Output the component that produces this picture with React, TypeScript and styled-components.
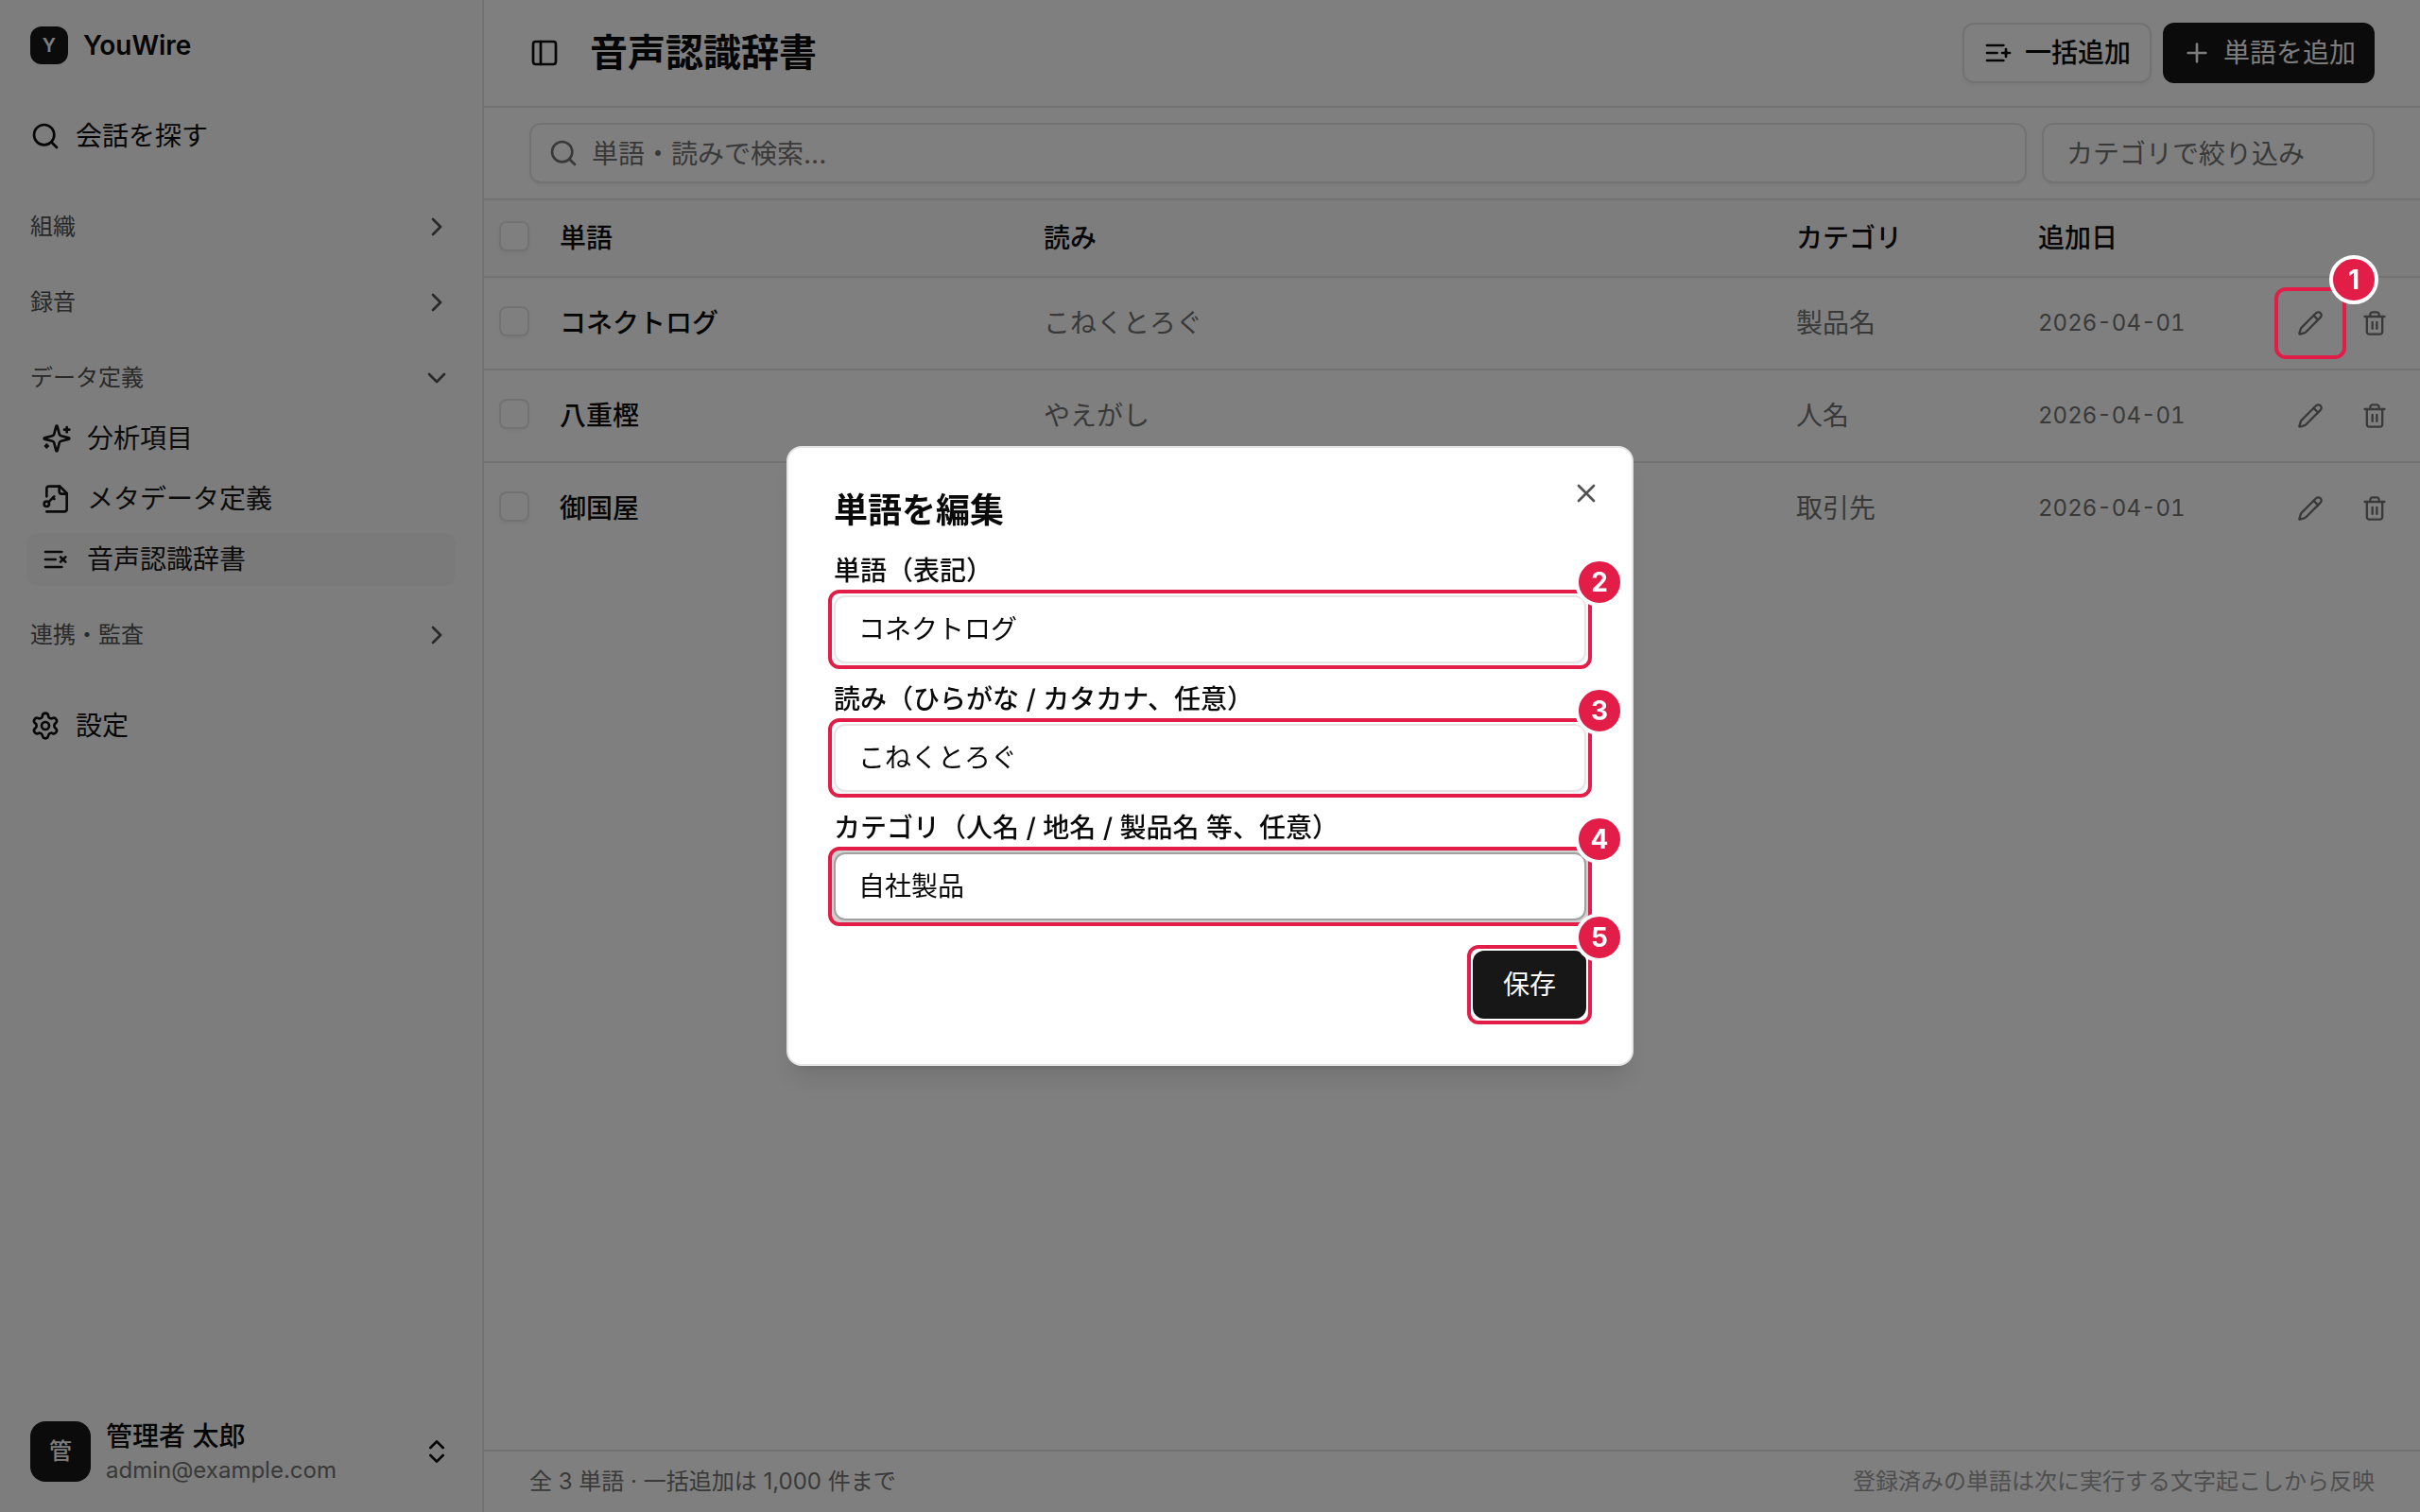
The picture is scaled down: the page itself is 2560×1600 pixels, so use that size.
import React from "react";
import styled, { createGlobalStyle, css } from "styled-components";
import {
  ChevronDown,
  ChevronRight,
  ChevronsUpDown,
  PanelLeft,
  Plus,
  Search,
  Settings,
  X,
} from "lucide-react";

const color = {
  text: "#0a0a0a",
  muted: "#737373",
  faint: "#9d9d9d",
  group: "#525252",
  border: "#e5e5e5",
  primary: "#171717",
  onPrimary: "#fafafa",
  sidebar: "#fafafa",
  accent: "#f5f5f5",
  mark: "#e11d48",
};

const GlobalStyle = createGlobalStyle`
  *, *::before, *::after { box-sizing: border-box; }
  body {
    margin: 0;
    background: #ffffff;
    color: ${color.text};
    font-family: Inter, "Noto Sans CJK JP", sans-serif;
    font-size: 28px;
    line-height: 40px;
    -webkit-font-smoothing: antialiased;
  }
  button, input { font: inherit; color: inherit; margin: 0; }
  button { background: none; border: 0; padding: 0; cursor: pointer; }
  svg { flex-shrink: 0; display: block; }
`;

/* ---------- icons ---------- */

const Glyph = ({ size = 32, children }: { size?: number; children: React.ReactNode }) => (
  <svg
    width={size}
    height={size}
    viewBox="0 0 24 24"
    fill="none"
    stroke="currentColor"
    strokeWidth="2"
    strokeLinecap="round"
    strokeLinejoin="round"
    aria-hidden="true"
  >
    {children}
  </svg>
);

const SparklesIcon = () => (
  <Glyph>
    <path d="M9.937 15.5A2 2 0 0 0 8.5 14.063l-6.135-1.582a.5.5 0 0 1 0-.962L8.5 9.936A2 2 0 0 0 9.937 8.5l1.582-6.135a.5.5 0 0 1 .963 0L14.063 8.5A2 2 0 0 0 15.5 9.937l6.135 1.581a.5.5 0 0 1 0 .964L15.5 14.063a2 2 0 0 0-1.437 1.437l-1.582 6.135a.5.5 0 0 1-.963 0z" />
    <path d="M20 3v4" />
    <path d="M22 5h-4" />
    <path d="M4 17v2" />
    <path d="M5 18H3" />
  </Glyph>
);

const FileKeyIcon = () => (
  <Glyph>
    <path d="M14 2v4a2 2 0 0 0 2 2h4" />
    <path d="M4 10V4a2 2 0 0 1 2-2h8.5L20 7.5V20a2 2 0 0 1-2 2H4" />
    <circle cx="4" cy="16" r="2" />
    <path d="m10 10-4.5 4.5" />
    <path d="m9 11 1 1" />
  </Glyph>
);

const ListXIcon = () => (
  <Glyph>
    <path d="M11 12H3" />
    <path d="M16 6H3" />
    <path d="M16 18H3" />
    <path d="m19 10-4 4" />
    <path d="m15 10 4 4" />
  </Glyph>
);

const ListPlusIcon = () => (
  <Glyph>
    <path d="M11 12H3" />
    <path d="M16 6H3" />
    <path d="M16 18H3" />
    <path d="M18 9v6" />
    <path d="M21 12h-6" />
  </Glyph>
);

const PencilIcon = () => (
  <Glyph size={28}>
    <path d="M21.174 6.812a1 1 0 0 0-3.986-3.987L3.842 16.174a2 2 0 0 0-.5.83l-1.321 4.352a.5.5 0 0 0 .623.622l4.353-1.32a2 2 0 0 0 .83-.497z" />
    <path d="m15 5 4 4" />
  </Glyph>
);

const TrashIcon = () => (
  <Glyph size={28}>
    <path d="M3 6h18" />
    <path d="M19 6v14c0 1-1 2-2 2H7c-1 0-2-1-2-2V6" />
    <path d="M8 6V4c0-1 1-2 2-2h4c1 0 2 1 2 2v2" />
    <path d="M10 11v6" />
    <path d="M14 11v6" />
  </Glyph>
);

/* ---------- layout ---------- */

const Shell = styled.div`
  display: flex;
  min-height: 100vh;
`;

const Sidebar = styled.aside`
  width: 512px;
  flex-shrink: 0;
  display: flex;
  flex-direction: column;
  padding: 16px;
  background: ${color.sidebar};
  border-right: 2px solid ${color.border};
`;

const Brand = styled.a`
  display: flex;
  align-items: center;
  gap: 16px;
  height: 64px;
  padding: 0 16px;
  margin-bottom: 32px;
  color: inherit;
  text-decoration: none;
  font-weight: 600;
`;

const BrandMark = styled.span`
  display: grid;
  place-items: center;
  width: 40px;
  height: 40px;
  border-radius: 12px;
  background: ${color.primary};
  color: ${color.onPrimary};
  font-size: 20px;
  line-height: 28px;
`;

const Nav = styled.nav`
  display: flex;
  flex-direction: column;
  flex: 1;
`;

const NavLink = styled.a`
  display: flex;
  align-items: center;
  gap: 16px;
  height: 64px;
  padding: 0 16px;
  color: inherit;
  text-decoration: none;
`;

const Groups = styled.div`
  display: flex;
  flex-direction: column;
  gap: 16px;
  padding: 32px 0;
`;

const GroupButton = styled.button`
  display: flex;
  align-items: center;
  justify-content: space-between;
  width: 100%;
  height: 64px;
  padding: 0 16px;
  color: ${color.group};
  font-size: 24px;
  line-height: 32px;
`;

const SubList = styled.ul`
  display: flex;
  flex-direction: column;
  gap: 8px;
  margin: 0;
  padding: 4px 12px;
  list-style: none;
`;

const SubLink = styled.a<{ $active?: boolean }>`
  display: flex;
  align-items: center;
  gap: 16px;
  height: 56px;
  padding: 0 16px;
  border-radius: 12px;
  color: ${color.primary};
  text-decoration: none;
  background: ${(p) => (p.$active ? color.accent : "transparent")};
`;

const UserButton = styled.button`
  display: flex;
  align-items: center;
  gap: 16px;
  height: 96px;
  padding: 0 16px;
  text-align: left;
`;

const Avatar = styled.span`
  display: grid;
  place-items: center;
  width: 64px;
  height: 64px;
  border-radius: 16px;
  background: ${color.primary};
  color: ${color.onPrimary};
  font-size: 24px;
  line-height: 32px;
  font-weight: 500;
`;

const UserText = styled.span`
  display: flex;
  flex-direction: column;
  flex: 1;
  min-width: 0;
`;

const UserName = styled.span`
  font-weight: 500;
`;

const UserMail = styled.span`
  color: ${color.muted};
  font-size: 24px;
  line-height: 32px;
`;

const Main = styled.main`
  flex: 1;
  min-width: 0;
  display: flex;
  flex-direction: column;
`;

const Header = styled.header`
  display: flex;
  align-items: center;
  gap: 32px;
  height: 114px;
  padding: 0 48px;
  border-bottom: 2px solid ${color.border};
`;

const IconButton = styled.button`
  display: grid;
  place-items: center;
`;

const Title = styled.h1`
  flex: 1;
  margin: 0;
  font-size: 40px;
  line-height: 56px;
  font-weight: 600;
`;

const Actions = styled.div`
  display: flex;
  gap: 12px;
`;

const Button = styled.button<{ $primary?: boolean; $tall?: boolean }>`
  display: inline-flex;
  align-items: center;
  justify-content: center;
  gap: 12px;
  height: ${(p) => (p.$tall ? 72 : 64)}px;
  padding: 0 ${(p) => (p.$tall ? 32 : 20)}px;
  border-radius: 12px;
  font-weight: 500;
  white-space: nowrap;
  ${(p) =>
    p.$primary
      ? css`
          background: ${color.primary};
          color: ${color.onPrimary};
          font-weight: 400;
        `
      : css`
          background: #ffffff;
          border: 2px solid ${color.border};
          box-shadow: 0 2px 4px rgba(0, 0, 0, 0.05);
        `}
`;

const Toolbar = styled.div`
  display: flex;
  gap: 16px;
  padding: 16px 48px;
  border-bottom: 2px solid ${color.border};
`;

const field = css`
  width: 100%;
  border: 2px solid ${color.border};
  border-radius: 12px;
  background: #ffffff;
  box-shadow: 0 2px 4px rgba(0, 0, 0, 0.05);
  outline: none;
  &::placeholder {
    color: ${color.muted};
    opacity: 1;
  }
`;

const SearchBox = styled.div`
  position: relative;
  flex: 1;
  color: ${color.muted};
  & > svg {
    position: absolute;
    left: 20px;
    top: 16px;
  }
`;

const FilterBox = styled.div`
  width: 352px;
`;

const ToolbarInput = styled.input<{ $icon?: boolean }>`
  ${field}
  display: block;
  height: 64px;
  padding: 2px 24px 0 ${(p) => (p.$icon ? 64 : 24)}px;
`;

const TableArea = styled.div`
  flex: 1;
`;

const Table = styled.table`
  width: 100%;
  table-layout: fixed;
  border-collapse: separate;
  border-spacing: 0;
`;

const Col = styled.col<{ $w?: string }>`
  width: ${(p) => p.$w ?? "auto"};
`;

const Th = styled.th`
  height: 82px;
  padding: 0 16px;
  text-align: left;
  font-weight: 500;
  background: #fafafa;
  border-bottom: 2px solid ${color.border};
`;

const Td = styled.td<{ $muted?: boolean; $strong?: boolean }>`
  height: 96px;
  padding: 0 16px;
  color: ${(p) => (p.$muted ? color.muted : "inherit")};
  font-weight: ${(p) => (p.$strong ? 500 : 400)};
  tr:not(:last-child) > & {
    height: 98px;
    border-bottom: 2px solid ${color.border};
  }
`;

const DateText = styled.time`
  display: block;
  font-size: 24px;
  line-height: 32px;
  font-variant-numeric: tabular-nums;
`;

const Checkbox = styled.input`
  appearance: none;
  display: block;
  width: 32px;
  height: 32px;
  margin-bottom: 4px;
  border: 2px solid ${color.border};
  border-radius: 8px;
  background: #ffffff;
  box-shadow: 0 2px 4px rgba(0, 0, 0, 0.05);
`;

const RowActions = styled.div`
  display: flex;
  gap: 4px;
`;

const RowButton = styled.button`
  display: grid;
  place-items: center;
  width: 64px;
  height: 64px;
  color: ${color.muted};
`;

const Footer = styled.footer`
  display: flex;
  align-items: center;
  justify-content: space-between;
  height: 66px;
  padding: 0 48px;
  border-top: 2px solid ${color.border};
  color: ${color.muted};
  font-size: 24px;
  line-height: 32px;
`;

const FooterNote = styled.span`
  color: ${color.faint};
`;

/* ---------- numbered marks ---------- */

const Marked = styled.div`
  position: relative;
`;

const MarkFrame = styled.span`
  position: absolute;
  inset: -6px;
  z-index: 20;
  border: 4px solid ${color.mark};
  border-radius: 12px;
  pointer-events: none;
`;

const MarkNumber = styled.span`
  position: absolute;
  top: -38px;
  right: -38px;
  display: grid;
  place-items: center;
  width: 52px;
  height: 52px;
  border: 4px solid #ffffff;
  border-radius: 50%;
  background: ${color.mark};
  color: #ffffff;
  font-size: 28px;
  line-height: 32px;
  font-weight: 700;
`;

const Mark = ({ n, children }: { n: number; children: React.ReactNode }) => (
  <Marked>
    {children}
    <MarkFrame>
      <MarkNumber>{n}</MarkNumber>
    </MarkFrame>
  </Marked>
);

/* ---------- dialog ---------- */

const Overlay = styled.div`
  position: fixed;
  inset: 0;
  z-index: 10;
  display: grid;
  place-items: center;
  background: rgba(0, 0, 0, 0.5);
`;

const Dialog = styled.div`
  position: relative;
  width: 896px;
  display: flex;
  flex-direction: column;
  gap: 32px;
  padding: 48px;
  border: 2px solid ${color.border};
  border-radius: 16px;
  background: #ffffff;
  box-shadow: 0 20px 30px -6px rgba(0, 0, 0, 0.1), 0 8px 12px -8px rgba(0, 0, 0, 0.1);
`;

const DialogTitle = styled.h2`
  margin: 0;
  font-size: 36px;
  line-height: 36px;
  font-weight: 600;
`;

const CloseButton = styled.button`
  position: absolute;
  top: 32px;
  right: 32px;
  opacity: 0.7;
`;

const Fields = styled.form`
  display: flex;
  flex-direction: column;
  gap: 24px;
`;

const Field = styled.div`
  display: flex;
  flex-direction: column;
  gap: 12px;
`;

const Label = styled.label`
  line-height: 28px;
  font-weight: 500;
`;

const DialogInput = styled.input<{ $focused?: boolean }>`
  ${field}
  display: block;
  height: 72px;
  padding: 0 24px 4px;
  ${(p) =>
    p.$focused &&
    css`
      border-color: #a1a1a1;
      box-shadow: 0 0 0 6px #d0d0d0;
    `}
`;

const DialogFooter = styled.div`
  display: flex;
  justify-content: flex-end;
`;

/* ---------- data ---------- */

const words = [
  { word: "コネクトログ", reading: "こねくとろぐ", category: "製品名", date: "2026-04-01" },
  { word: "八重樫", reading: "やえがし", category: "人名", date: "2026-04-01" },
  { word: "御国屋", reading: "", category: "取引先", date: "2026-04-01" },
];

const fields = [
  { id: "word", label: "単語（表記）", value: "コネクトログ" },
  { id: "reading", label: "読み（ひらがな / カタカナ、任意）", value: "こねくとろぐ" },
  { id: "category", label: "カテゴリ（人名 / 地名 / 製品名 等、任意）", value: "自社製品" },
];

const Group = ({ label, open, children }: { label: string; open?: boolean; children?: React.ReactNode }) => (
  <div>
    <GroupButton type="button" aria-expanded={!!open}>
      {label}
      {open ? <ChevronDown size={32} /> : <ChevronRight size={32} />}
    </GroupButton>
    {children}
  </div>
);

export default function App() {
  return (
    <>
      <GlobalStyle />
      <Shell>
        <Sidebar>
          <Brand href="#">
            <BrandMark>Y</BrandMark>
            YouWire
          </Brand>
          <Nav>
            <NavLink href="#search">
              <Search size={32} />
              会話を探す
            </NavLink>
            <Groups>
              <Group label="組織" />
              <Group label="録音" />
              <Group label="データ定義" open>
                <SubList>
                  <li>
                    <SubLink href="#items">
                      <SparklesIcon />
                      分析項目
                    </SubLink>
                  </li>
                  <li>
                    <SubLink href="#metadata">
                      <FileKeyIcon />
                      メタデータ定義
                    </SubLink>
                  </li>
                  <li>
                    <SubLink href="#dictionary" $active aria-current="page">
                      <ListXIcon />
                      音声認識辞書
                    </SubLink>
                  </li>
                </SubList>
              </Group>
              <Group label="連携・監査" />
            </Groups>
            <NavLink href="#settings">
              <Settings size={32} />
              設定
            </NavLink>
          </Nav>
          <UserButton type="button">
            <Avatar>管</Avatar>
            <UserText>
              <UserName>管理者 太郎</UserName>
              <UserMail>admin@example.com</UserMail>
            </UserText>
            <ChevronsUpDown size={32} />
          </UserButton>
        </Sidebar>

        <Main>
          <Header>
            <IconButton type="button" aria-label="サイドバーを切り替え">
              <PanelLeft size={32} />
            </IconButton>
            <Title>音声認識辞書</Title>
            <Actions>
              <Button type="button">
                <ListPlusIcon />
                一括追加
              </Button>
              <Button type="button" $primary>
                <Plus size={32} />
                単語を追加
              </Button>
            </Actions>
          </Header>
          <Toolbar>
            <SearchBox>
              <Search size={32} />
              <ToolbarInput $icon type="text" aria-label="単語・読みで検索" placeholder="単語・読みで検索..." />
            </SearchBox>
            <FilterBox>
              <ToolbarInput type="text" aria-label="カテゴリで絞り込み" placeholder="カテゴリで絞り込み" />
            </FilterBox>
          </Toolbar>
          <TableArea>
            <Table>
              <colgroup>
                <Col $w="64px" />
                <Col $w="25%" />
                <Col />
                <Col $w="256px" />
                <Col $w="256px" />
                <Col $w="164px" />
              </colgroup>
              <thead>
                <tr>
                  <Th>
                    <Checkbox type="checkbox" aria-label="すべて選択" />
                  </Th>
                  <Th>単語</Th>
                  <Th>読み</Th>
                  <Th>カテゴリ</Th>
                  <Th>追加日</Th>
                  <Th />
                </tr>
              </thead>
              <tbody>
                {words.map((w, i) => (
                  <tr key={w.word}>
                    <Td>
                      <Checkbox type="checkbox" aria-label={`${w.word}を選択`} />
                    </Td>
                    <Td $strong>{w.word}</Td>
                    <Td $muted>{w.reading}</Td>
                    <Td $muted>{w.category}</Td>
                    <Td $muted>
                      <DateText>{w.date}</DateText>
                    </Td>
                    <Td>
                      <RowActions>
                        {i === 0 ? (
                          <Mark n={1}>
                            <RowButton type="button" aria-label="編集">
                              <PencilIcon />
                            </RowButton>
                          </Mark>
                        ) : (
                          <RowButton type="button" aria-label="編集">
                            <PencilIcon />
                          </RowButton>
                        )}
                        <RowButton type="button" aria-label="削除">
                          <TrashIcon />
                        </RowButton>
                      </RowActions>
                    </Td>
                  </tr>
                ))}
              </tbody>
            </Table>
          </TableArea>
          <Footer>
            <span>全 3 単語 · 一括追加は 1,000 件まで</span>
            <FooterNote>登録済みの単語は次に実行する文字起こしから反映</FooterNote>
          </Footer>
        </Main>
      </Shell>

      <Overlay>
        <Dialog role="dialog" aria-modal="true" aria-labelledby="dialog-title">
          <DialogTitle id="dialog-title">単語を編集</DialogTitle>
          <Fields id="word-form">
            {fields.map((f, i) => (
              <Field key={f.id}>
                <Label htmlFor={f.id}>{f.label}</Label>
                <Mark n={i + 2}>
                  <DialogInput id={f.id} type="text" defaultValue={f.value} $focused={f.id === "category"} />
                </Mark>
              </Field>
            ))}
          </Fields>
          <DialogFooter>
            <Mark n={5}>
              <Button type="submit" form="word-form" $primary $tall>
                保存
              </Button>
            </Mark>
          </DialogFooter>
          <CloseButton type="button" aria-label="閉じる">
            <X size={32} />
          </CloseButton>
        </Dialog>
      </Overlay>
    </>
  );
}
